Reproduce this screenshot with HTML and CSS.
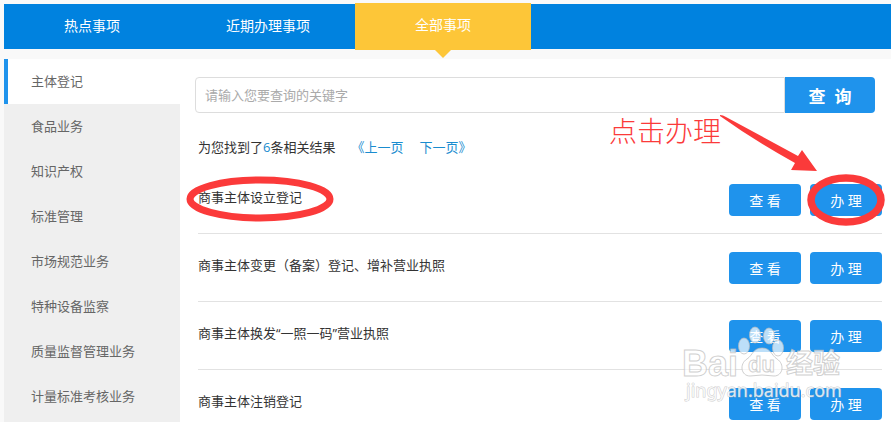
FILE: index.html
```html
<!DOCTYPE html>
<html lang="zh-CN">
<head>
<meta charset="utf-8">
<meta name="viewport" content="width=device-width, initial-scale=1">
<title>全部事项</title>
<link rel="stylesheet" href="styles.css">
</head>
<body>
<nav class="tabs">
  <a class="tab" href="#hot">热点事项</a>
  <a class="tab" href="#recent">近期办理事项</a>
  <a class="tab tab-active" href="#all">全部事项</a>
</nav>
<div class="layout">
  <nav class="sidebar">
    <a class="side-item side-active" href="#s1">主体登记</a>
    <a class="side-item" href="#s2">食品业务</a>
    <a class="side-item" href="#s3">知识产权</a>
    <a class="side-item" href="#s4">标准管理</a>
    <a class="side-item" href="#s5">市场规范业务</a>
    <a class="side-item" href="#s6">特种设备监察</a>
    <a class="side-item" href="#s7">质量监督管理业务</a>
    <a class="side-item" href="#s8">计量标准考核业务</a>
  </nav>
  <main class="content">
    <form class="search">
      <input class="search-input" type="text" aria-label="关键字" placeholder="请输入您要查询的关键字">
      <button class="search-button" type="button">查&nbsp; 询</button>
    </form>
    <div class="summary">
      <span>为您找到了<span class="count">6</span>条相关结果</span>
      <a class="page-link page-prev" href="#prev">《上一页</a>
      <a class="page-link" href="#next">下一页》</a>
    </div>
    <ul class="results">
      <li class="result">
        <span class="result-title">商事主体设立登记
          <svg class="ring-title" viewBox="0 0 148 46" aria-hidden="true"><ellipse cx="74" cy="23" rx="70" ry="19" fill="none" stroke="#fb3a3a" stroke-width="7"/></svg>
        </span>
        <button class="action" type="button">查 看</button>
        <button class="action" type="button">办 理
          <svg class="ring-action" viewBox="0 0 78 52" aria-hidden="true"><ellipse cx="39" cy="26" rx="35" ry="22" fill="none" stroke="#fb3a3a" stroke-width="7.5"/></svg>
        </button>
      </li>
      <li class="result">
        <span class="result-title">商事主体变更（备案）登记、增补营业执照</span>
        <button class="action" type="button">查 看</button>
        <button class="action" type="button">办 理</button>
      </li>
      <li class="result">
        <span class="result-title">商事主体换发“一照一码”营业执照</span>
        <button class="action" type="button">查 看</button>
        <button class="action" type="button">办 理</button>
      </li>
      <li class="result">
        <span class="result-title">商事主体注销登记</span>
        <button class="action" type="button">查 看</button>
        <button class="action" type="button">办 理</button>
      </li>
    </ul>
    <div class="note">点击办理</div>
    <svg class="arrow" viewBox="0 0 98 58" aria-hidden="true"><path d="M0 0Q3 0 6 2L78 41 82 35 97 56 71 55 75 48Q35 26 0 1Z" fill="#fb3a3a"/></svg>
    <svg class="watermark" viewBox="0 0 166 84" role="img" aria-label="Baidu经验 jingyan.baidu.com">
      <g class="mark">
        <ellipse cx="63" cy="25" rx="5.5" ry="8"/>
        <ellipse cx="74" cy="14" rx="5.5" ry="8"/>
        <ellipse cx="88" cy="15" rx="5.5" ry="8"/>
        <ellipse cx="97" cy="27" rx="5.5" ry="8"/>
        <path d="M81 27C72 27 72 34 66 38C58 43 60 55 69 55Q81 53 93 55C102 55 104 43 96 38C90 34 90 27 81 27Z"/>
        <text class="mark-large" x="1" y="55">Bai</text>
        <text class="mark-du" x="67" y="51">du</text>
        <text class="mark-cjk" x="105" y="52">经验</text>
      </g>
      <text class="mark-url" x="5" y="76">jingyan.baidu.com</text>
    </svg>
  </main>
</div>
</body>
</html>
```

FILE: styles.css
```css
* {
  box-sizing: border-box;
}

body {
  display: flex;
  flex-direction: column;
  height: 100vh;
  margin: 0;
  padding: 4px 0 0 4px;
  overflow: hidden;
  background: #f9f9f9;
  color: #333;
  font: 13px/20px "Open Sans", "Noto Sans CJK SC", sans-serif;
}

a {
  text-decoration: none;
}

button,
input {
  font-family: inherit;
}

.tabs {
  display: flex;
  flex: none;
  height: 45px;
  margin-bottom: 10px;
  background: #0082df;
}

.tab {
  width: 176px;
  color: #fff;
  font-size: 14px;
  line-height: 44px;
  text-align: center;
}

.tab-active {
  position: relative;
  margin: -1px 0 -1px -1px;
  background: #fdc638;
}

.tab-active::after {
  content: "";
  position: absolute;
  top: 100%;
  left: 50%;
  margin-left: -8px;
  border: 8px solid transparent;
  border-top-color: #fdc638;
  border-bottom: 0;
}

.layout {
  display: flex;
  flex: 1;
  min-height: 0;
  background: #fff;
}

.sidebar {
  flex: none;
  width: 176px;
  background: #efefef;
}

.side-item {
  display: block;
  height: 45px;
  padding-left: 27px;
  color: #666;
  line-height: 44px;
}

.side-active {
  padding-left: 23px;
  border-left: 4px solid #1f93ec;
  background: #fff;
}

.content {
  position: relative;
  flex: 1;
  min-width: 0;
  padding: 18px 9px 0 18px;
}

.search {
  display: flex;
  height: 36px;
  margin: 0 7px 0 -3px;
}

.search-input {
  flex: 1;
  min-width: 0;
  padding: 0 9px;
  border: 1px solid #ddd;
  border-radius: 4px 0 0 4px;
  background: #fff;
  font-size: 13px;
}

.search-input::placeholder {
  color: #aaa;
}

.search-button {
  width: 90px;
  padding: 0;
  border: 0;
  border-radius: 0 4px 4px 0;
  background: #1f93ec;
  color: #fff;
  font-size: 17px;
  font-weight: 700;
}

.summary {
  display: flex;
  height: 53px;
  padding-top: 24px;
}

.count,
.page-link {
  color: #1a8ccf;
}

.page-prev {
  margin: 0 16px;
}

.results {
  margin: 0;
  padding: 0;
  list-style: none;
}

.result {
  display: flex;
  gap: 9px;
  height: 68px;
  padding-top: 18px;
  border-bottom: 1px solid #e2e2e2;
}

.result-title {
  position: relative;
  margin-right: auto;
  line-height: 26px;
}

.action {
  position: relative;
  width: 72px;
  height: 32px;
  padding: 0;
  border: 0;
  border-radius: 4px;
  background: #1f93ec;
  color: #fff;
  font-size: 14px;
}

.ring-title {
  position: absolute;
  top: -8px;
  left: -12px;
  width: 148px;
  height: 46px;
}

.ring-action {
  position: absolute;
  top: -10px;
  left: -3px;
  width: 78px;
  height: 52px;
}

.note {
  position: absolute;
  top: 53px;
  right: 170px;
  color: #fb3a3a;
  font-family: "Noto Sans CJK SC", serif;
  font-size: 28px;
  font-weight: 300;
  line-height: 36px;
}

.arrow {
  position: absolute;
  top: 56px;
  right: 73px;
  width: 98px;
  height: 58px;
}

.watermark {
  position: absolute;
  top: 262px;
  right: 44px;
  width: 166px;
  height: 84px;
  pointer-events: none;
}

.mark {
  fill: #fff;
  fill-opacity: .7;
  stroke: #bbb;
  stroke-opacity: .7;
  stroke-width: 1px;
}

.mark-large {
  font: 700 36px "Liberation Sans", sans-serif;
}

.mark-du {
  font: 700 22px "Liberation Sans", sans-serif;
}

.mark-cjk {
  font: 700 27px "Noto Sans CJK SC", sans-serif;
}

.mark-url {
  fill: #fff;
  fill-opacity: .8;
  stroke: #aaa;
  stroke-opacity: .6;
  stroke-width: 1px;
  paint-order: stroke;
  font: 18px "Noto Sans", sans-serif;
}
```
